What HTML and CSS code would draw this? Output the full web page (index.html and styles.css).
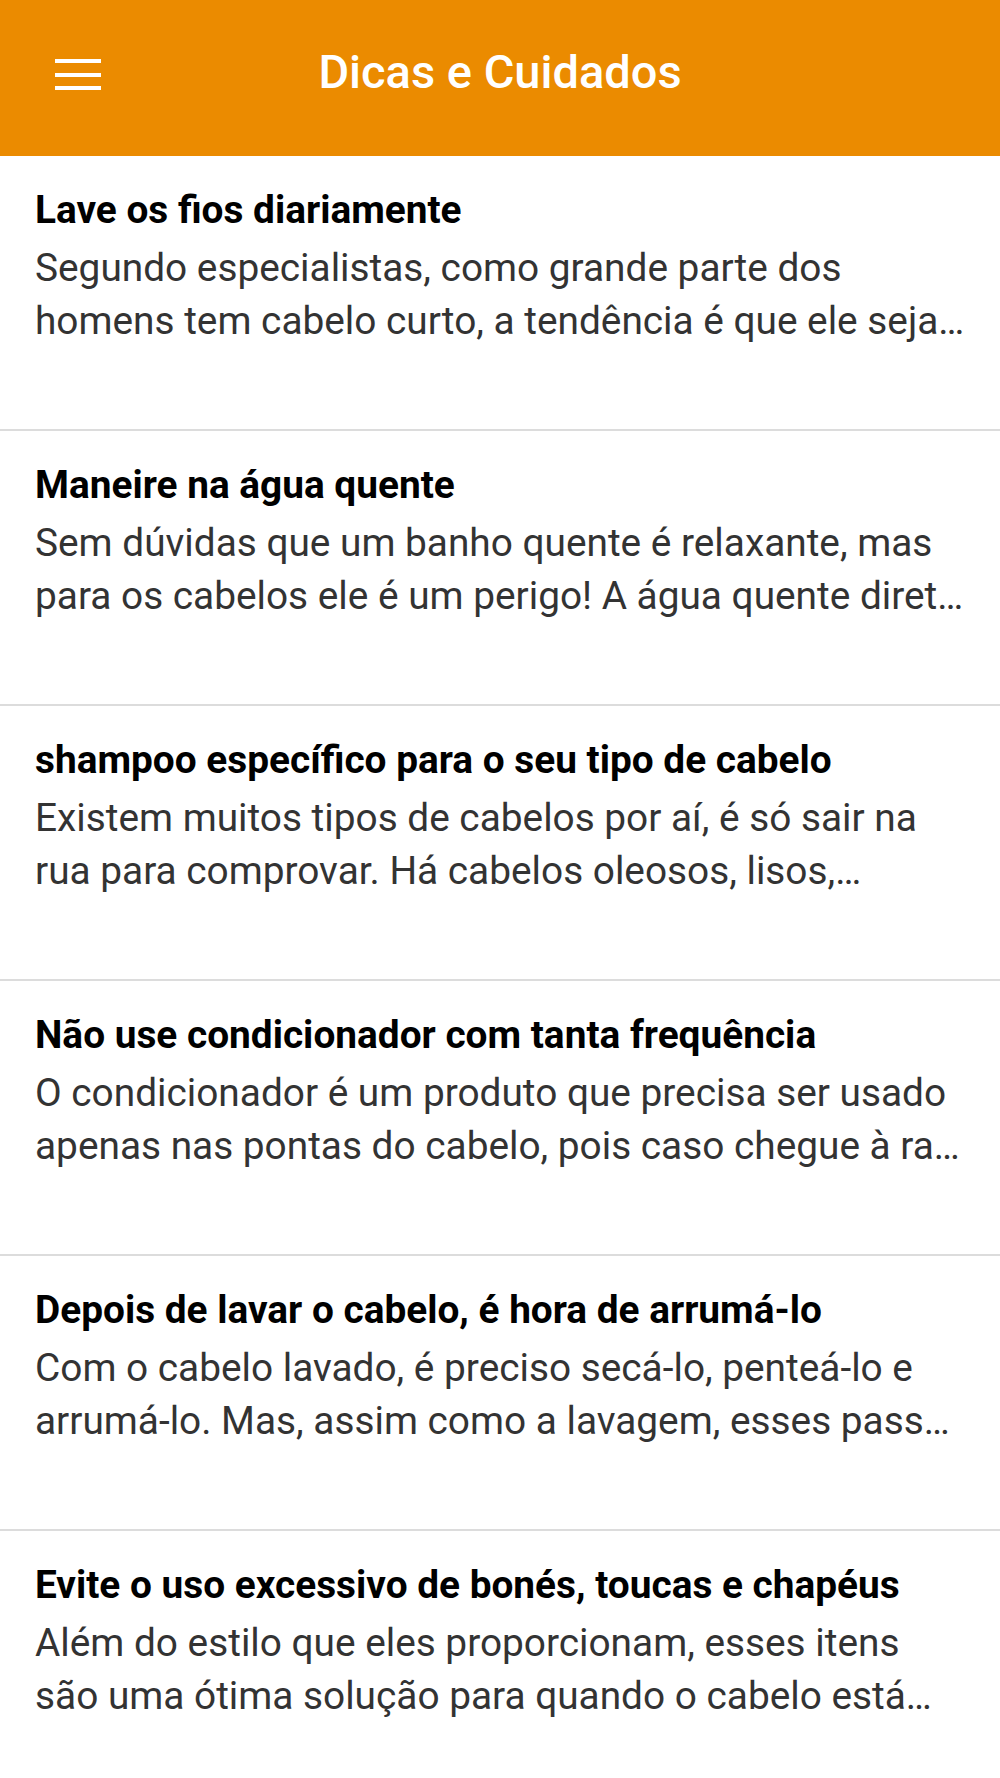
FILE: index.html
```html
<!DOCTYPE html>
<html lang="pt-BR">
<head>
  <meta charset="UTF-8">
  <title>Dicas e Cuidados</title>
  <meta name="viewport" content="width=device-width, initial-scale=1.0"/>
  <link rel="stylesheet" href="styles.css">
</head>
<body>
  <header class="toolbar">
    <div class="menu-btn">
      <svg width="46" height="31" viewBox="0 0 46 31">
        <rect x="0" y="0" width="46" height="4" fill="#fff"/>
        <rect x="0" y="14" width="46" height="4" fill="#fff"/>
        <rect x="0" y="27" width="46" height="4" fill="#fff"/>
      </svg>
    </div>
    <h1 class="toolbar-title">Dicas e Cuidados</h1>
    <div></div>
  </header>

  <ul class="tips">
    <li class="tip">
      <h2 class="tip-title">Lave os fios diariamente</h2>
      <p class="tip-text">
        <span class="line">Segundo especialistas, como grande parte dos</span>
        <span class="line">homens tem cabelo curto, a tendência é que ele seja…</span>
      </p>
    </li>
    <li class="tip">
      <h2 class="tip-title">Maneire na água quente</h2>
      <p class="tip-text">
        <span class="line">Sem dúvidas que um banho quente é relaxante, mas</span>
        <span class="line">para os cabelos ele é um perigo! A água quente diret…</span>
      </p>
    </li>
    <li class="tip">
      <h2 class="tip-title">shampoo específico para o seu tipo de cabelo</h2>
      <p class="tip-text">
        <span class="line">Existem muitos tipos de cabelos por aí, é só sair na</span>
        <span class="line">rua para comprovar. Há cabelos oleosos, lisos,…</span>
      </p>
    </li>
    <li class="tip">
      <h2 class="tip-title">Não use condicionador com tanta frequência</h2>
      <p class="tip-text">
        <span class="line">O condicionador é um produto que precisa ser usado</span>
        <span class="line">apenas nas pontas do cabelo, pois caso chegue à ra…</span>
      </p>
    </li>
    <li class="tip">
      <h2 class="tip-title">Depois de lavar o cabelo, é hora de arrumá-lo</h2>
      <p class="tip-text">
        <span class="line">Com o cabelo lavado, é preciso secá-lo, penteá-lo e</span>
        <span class="line">arrumá-lo. Mas, assim como a lavagem, esses pass…</span>
      </p>
    </li>
    <li class="tip">
      <h2 class="tip-title">Evite o uso excessivo de bonés, toucas e chapéus</h2>
      <p class="tip-text">
        <span class="line">Além do estilo que eles proporcionam, esses itens</span>
        <span class="line">são uma ótima solução para quando o cabelo está…</span>
      </p>
    </li>
  </ul>
</body>
</html>
```

FILE: styles.css
```css
body {
  margin: 0;
  background-color: #fff;
  font-family: Roboto, 'Noto Sans', sans-serif;
}
.toolbar {
  display: grid;
  grid-template-columns: 1fr auto 1fr;
  align-items: center;
  height: 156px;
  padding-bottom: 14px;
  box-sizing: border-box;
  background-color: #eb8b00;
  color: white;
}
.menu-btn {
  padding-left: 55px;
  margin-top: 6px;
  display: flex;
}
.toolbar-title {
  margin: 0;
  font-size: 47px;
  font-weight: 500;
  line-height: normal;
}
.tips {
  list-style: none;
  margin: 0;
  padding: 0;
}
.tip {
  height: 275px;
  box-sizing: border-box;
  padding: 31px 35px 0 35px;
  border-bottom: 2px solid #dcdcdc;
}
.tip-title {
  margin: 0;
  font-size: 38.8px;
  font-weight: 700;
  line-height: 46px;
  color: #000;
}
.tip-text {
  margin: 8px 0 0;
  font-size: 38.8px;
  line-height: 53px;
  color: #333;
}
.line {
  display: block;
  white-space: nowrap;
}
```
